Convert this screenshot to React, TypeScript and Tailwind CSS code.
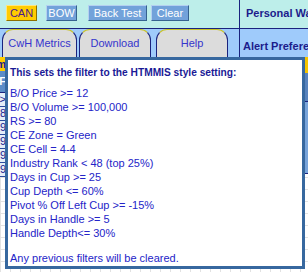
const font = "font-['Liberation_Sans',Arial,sans-serif]";

function TopButton({ label, variant }: { label: string; variant: "yellow" | "blue" }) {
  const cls =
    variant === "yellow"
      ? "bg-[#ffcc00] text-[#4a1a8c] border-t-[#ffe680] border-l-[#ffe680] border-r-[#8c7000] border-b-[#8c7000]"
      : "bg-[#72a2da] text-white border-t-[#b5d0f0] border-l-[#b5d0f0] border-r-[#36628f] border-b-[#36628f]";
  return (
    <div
      className={`h-[16px] px-[4px] flex items-center justify-center border-[1.5px] text-[11px] leading-none whitespace-nowrap ${cls}`}
    >
      {label}
    </div>
  );
}

function Tab({ label, width }: { label: string; width: string }) {
  return (
    <div
      className={`${width} h-[30px] shrink-0 flex items-center justify-center bg-[#dcdcdc] rounded-t-[11px] border-[1.5px] border-t-[#c9c327] border-l-[#1a237e] border-r-[#1a237e] border-b-transparent text-[11px] text-[#3535cc] leading-none whitespace-nowrap`}
    >
      <span className="-mt-[1px]">{label}</span>
    </div>
  );
}

const lines = [
  "B/O Price >= 12",
  "B/O Volume >= 100,000",
  "RS >= 80",
  "CE Zone = Green",
  "CE Cell = 4-4",
  "Industry Rank < 48 (top 25%)",
  "Days in Cup >= 25",
  "Cup Depth <= 60%",
  "Pivot % Off Left Cup >= -15%",
  "Days in Handle >= 5",
  "Handle Depth<= 30%",
];

export default function App() {
  return (
    <div className={`relative w-[308px] h-[272px] overflow-hidden bg-white ${font}`}>
      {/* top bar */}
      <div className="flex h-[29px] bg-[#bdeeea] border-b border-[#1a237e]">
        <div className="w-[239px] shrink-0 flex items-start pl-[6px] pt-[5px]">
          <div className="w-[31px]">
            <TopButton label="CAN" variant="yellow" />
          </div>
          <div className="w-[31px] ml-[9px]">
            <TopButton label="BOW" variant="blue" />
          </div>
          <div className="w-[59px] ml-[11px]">
            <TopButton label="Back Test" variant="blue" />
          </div>
          <div className="w-[38px] ml-[4px]">
            <TopButton label="Clear" variant="blue" />
          </div>
        </div>
        <div className="flex-1 border-l border-[#1a237e] pl-[6px] pt-[8px] text-[11px] font-bold text-[#1c1c8c] whitespace-nowrap overflow-hidden leading-none">
          Personal Watch List
        </div>
      </div>

      {/* tab row */}
      <div className="flex h-[28px] bg-[#9fcbfb] overflow-hidden">
        <div className="w-[239px] shrink-0 flex items-start gap-[2px] pl-[2px]">
          <Tab label="CwH Metrics" width="w-[75px]" />
          <Tab label="Download" width="w-[72px]" />
          <div className="w-[1px]" />
          <Tab label="Help" width="w-[72px]" />
        </div>
        <div className="flex-1 border-l border-[#1a237e] pl-[3px] pt-[12px] text-[11px] font-bold text-[#1c1c8c] whitespace-nowrap overflow-hidden leading-none">
          Alert Preferences
        </div>
      </div>

      {/* underlying content */}
      <div className="flex h-[215px] bg-white bg-[linear-gradient(#e2e2e2_1px,transparent_1px),linear-gradient(90deg,#e2e2e2_1px,transparent_1px)] bg-[length:10px_12px]">
        <div className="w-[6px] shrink-0 flex flex-col overflow-hidden text-[11px] leading-none">
          <div className="h-[14px] bg-[#ffcc00] flex items-center justify-end text-[#1c1c8c] font-bold">m</div>
          <div className="h-[22px] bg-[#5b8cc8] flex items-center justify-end text-white font-bold border-b border-[#1a237e]">F</div>
          <div className="h-[14px] bg-[#e4edf8] flex items-center justify-end text-[#1c1c8c] border-b border-[#2a4a9e]">&gt;</div>
          <div className="h-[14px] bg-[#e4edf8] flex items-center justify-end text-[#1c1c8c] border-b border-[#2a4a9e]">8</div>
          <div className="h-[14px] bg-[#e4edf8] flex items-center justify-end text-[#1c1c8c] border-b border-[#2a4a9e]">9</div>
          <div className="h-[14px] bg-[#e4edf8] flex items-center justify-end text-[#1c1c8c] border-b border-[#2a4a9e]">9</div>
          <div className="h-[14px] bg-[#e4edf8] flex items-center justify-end text-[#1c1c8c] border-b border-[#2a4a9e]">9</div>
          <div className="h-[14px] bg-[#e4edf8] flex items-center justify-end text-[#1c1c8c] border-b border-[#2a4a9e]">9</div>
        </div>
        <div className="flex-1" />
        <div className="w-[3px] shrink-0 flex flex-col">
          <div className="h-[16px] bg-[#f5c400]" />
          <div className="h-[29px] bg-[#5883bd] border-b border-[#1a237e]" />
          <div className="h-[72px] bg-[#78a4da] border-b border-[#1a237e]" />
        </div>
      </div>

      {/* popup */}
      <div className="absolute left-[5px] top-[57px] w-[300px] h-[212px] bg-white border-[3px] border-[#37689f] pl-[2px] pt-[6px]">
        <div className="text-[10.2px] font-bold leading-[14px] text-[#1a1a96] whitespace-nowrap">
          This sets the filter to the HTMMIS style setting:
        </div>
        <div className="mt-[6px] text-[11px] leading-[14px] text-[#2424c8] whitespace-nowrap">
          {lines.map((l) => (
            <div key={l}>{l}</div>
          ))}
          <div className="mt-[11px]">Any previous filters will be cleared.</div>
        </div>
      </div>
    </div>
  );
}
